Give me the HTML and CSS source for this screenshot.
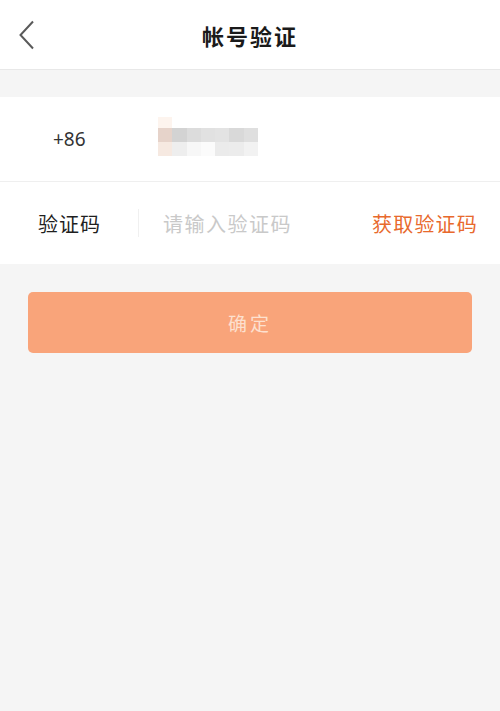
FILE: index.html
```html
<!DOCTYPE html>
<html lang="zh-CN">
<head>
<meta charset="utf-8">
<link rel="stylesheet" href="styles.css">
</head>
<body>
<div class="page">
  <header class="topbar">
    <span class="back">
      <svg width="18" height="30" viewBox="0 0 18 30"><path d="M15 1.5 L2.5 15 L15 28.5" fill="none" stroke="#5a5a5a" stroke-width="2"/></svg>
    </span>
    <h1 class="title">帐号验证</h1>
  </header>
  <div class="gap"></div>
  <section class="form">
    <div class="row phone-row">
      <span class="cc">+86</span>
      <div class="mask">
        <div class="mask-top"><i style="background:#fdf4ee"></i></div>
        <div class="mask-row">
          <i style="background:#e6d3ca"></i><i style="background:#d3d3d3"></i><i style="background:#dcdcdc"></i><i style="background:#e1e1e1"></i><i style="background:#e3e3e3"></i><i style="background:#d9d9d9"></i><i style="background:#dfdfdf"></i>
        </div>
        <div class="mask-row">
          <i style="background:#f6e9e1"></i><i style="background:#eeeeee"></i><i style="background:#f7f7f7"></i><i style="background:#fbfbfb"></i><i style="background:#ebebeb"></i><i style="background:#ececec"></i><i style="background:#f2f2f2"></i>
        </div>
      </div>
    </div>
    <div class="row code-row">
      <span class="label">验证码</span>
      <span class="sep"></span>
      <span class="placeholder">请输入验证码</span>
      <span class="get">获取验证码</span>
    </div>
  </section>
  <div class="btn-wrap">
    <button class="confirm">确定</button>
  </div>
</div>
</body>
</html>
```
FILE: styles.css
```css
html, body {
  margin: 0;
  padding: 0;
  background: #f5f5f5;
  font-family: "Noto Sans CJK SC", "Noto Sans", sans-serif;
}
.page {
  width: 500px;
  min-height: 711px;
  background: #f5f5f5;
}
.topbar {
  height: 69px;
  background: #fff;
  border-bottom: 1px solid #e8e8e8;
  display: flex;
  align-items: center;
  justify-content: center;
  position: relative;
}
.back {
  position: absolute;
  left: 18px;
  top: 20px;
  width: 18px;
  height: 30px;
}
.title {
  margin: 0;
  font-size: 22px;
  font-weight: 700;
  letter-spacing: 2px;
  color: #1a1a1a;
}
.gap {
  height: 27px;
}
.form {
  background: #fff;
}
.row {
  display: flex;
  align-items: center;
}
.phone-row {
  height: 84px;
  border-bottom: 1px solid #efefef;
}
.cc {
  width: 87px;
  padding-left: 53px;
  box-sizing: border-box;
  font-size: 19px;
  color: #333;
  font-family: "Noto Sans", sans-serif;
  white-space: nowrap;
}
.mask {
  margin-left: 71px;
  display: flex;
  flex-direction: column;
  margin-top: -6px;
}
.mask-top {
  display: flex;
  height: 11px;
}
.mask-row {
  display: flex;
  height: 14px;
}
.mask i {
  display: block;
  width: 14.3px;
  height: 100%;
}
.code-row {
  height: 82px;
}
.label {
  padding-left: 38px;
  font-size: 20px;
  letter-spacing: 1px;
  color: #1f1f1f;
  width: 138px;
  box-sizing: border-box;
}
.sep {
  width: 1px;
  height: 28px;
  background: #f0f0f0;
}
.placeholder {
  margin-left: 24px;
  font-size: 20px;
  letter-spacing: 1.5px;
  color: #c9c9c9;
  flex: 1;
}
.get {
  font-size: 20px;
  letter-spacing: 1.2px;
  color: #e8692c;
  margin-right: 22px;
}
.btn-wrap {
  padding: 28px 28px 0;
}
.confirm {
  display: block;
  width: 100%;
  height: 61px;
  border: none;
  border-radius: 5px;
  background: #f9a47a;
  color: #fde0cf;
  font-size: 19px;
  letter-spacing: 3px;
  font-family: "Noto Sans CJK SC", sans-serif;
}
```
